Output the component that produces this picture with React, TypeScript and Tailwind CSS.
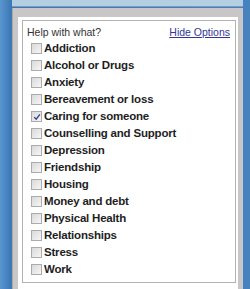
import React from "react";

const TOPICS = [
  "Addiction",
  "Alcohol or Drugs",
  "Anxiety",
  "Bereavement or loss",
  "Caring for someone",
  "Counselling and Support",
  "Depression",
  "Friendship",
  "Housing",
  "Money and debt",
  "Physical Health",
  "Relationships",
  "Stress",
  "Work",
];

const CHECKED = "Caring for someone";

function Box({ checked }: { checked: boolean }) {
  return (
    <span className="w-[11px] h-[11px] shrink-0 border border-[#ababab] bg-gradient-to-br from-[#d9d9d9] to-[#f6f6f6] flex items-center justify-center">
      {checked && (
        <svg viewBox="0 0 10 10" className="w-[8px] h-[8px]">
          <path d="M1.5 5.2 L4 7.8 L8.6 1.6" fill="none" stroke="#2b3f8f" strokeWidth={1.6} />
        </svg>
      )}
    </span>
  );
}

export default function App() {
  return (
    <div
      className="w-[250px] h-[289px] overflow-hidden flex flex-col bg-[linear-gradient(to_right,#5b96d0_0px,#3c78b5_11px,#4682bf_100%)]"
      style={{ fontFamily: '"Liberation Sans", Arial, sans-serif' }}
    >
      <div className="ml-[12px] mr-[7px] h-[7px] bg-[#b4cfe2] border-b border-[#7b9bb8] shrink-0" />
      <div className="mt-[1px] ml-[12px] mr-[7px] flex-1 bg-[#c7c7c7] border-l border-[#aaaaaa] pt-[9px] pl-[5px] pr-[5px]">
        <div className="h-full bg-white pl-[4px] pr-[2px] pt-[3px]">
          <div className="border border-[#b2b2b2] pt-[4px] pb-[4px]">
            <div className="h-[15px] flex items-center justify-between pl-[4px] pr-[5px] text-[10.5px] leading-[15px]">
              <span className="text-[#333333]">Help with what?</span>
              <a href="#" className="text-[#34349a] underline">Hide Options</a>
            </div>
            <ul className="pl-[8px]">
              {TOPICS.map((t) => (
                <li key={t} className="h-[17px] flex items-center gap-[2px]">
                  <Box checked={t === CHECKED} />
                  <span className="text-[11.5px] font-bold tracking-[-0.2px] leading-[17px] text-[#1e1e1e]">
                    {t}
                  </span>
                </li>
              ))}
            </ul>
          </div>
        </div>
      </div>
    </div>
  );
}
